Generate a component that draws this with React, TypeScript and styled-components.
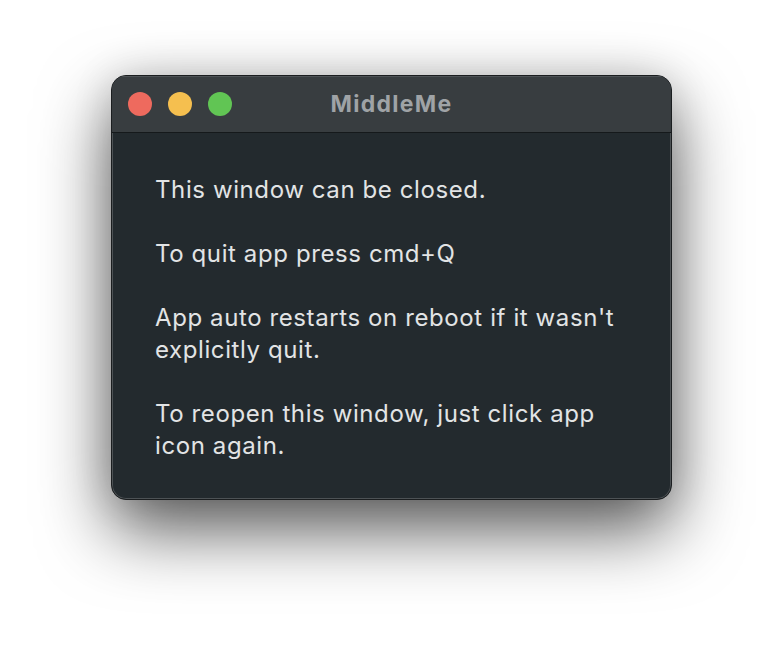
import React from 'react';
import styled, { createGlobalStyle } from 'styled-components';

const GlobalStyle = createGlobalStyle`
  html, body {
    margin: 0;
    padding: 0;
    background: #ffffff;
  }
`;

// Paragraphs shown in the window body.
const lines: string[][] = [
  ['This window can be closed.'],
  ['To quit app press cmd+Q'],
  ["App auto restarts on reboot if it wasn't", 'explicitly quit.'],
  ['To reopen this window, just click app', 'icon again.'],
];

/**
 * App draws the MiddleMe info window on a plain desktop.
 */
export default function App() {
  return (
    <Desktop>
      <GlobalStyle />
      <Window>
        <TitleBar>
          <Lights>
            <Light color="#ee6a5e" />
            <Light color="#f5bf4f" />
            <Light color="#61c554" />
          </Lights>
          <Title>MiddleMe</Title>
        </TitleBar>
        <Body>
          {lines.map((para, i) => (
            <Paragraph key={i}>
              {para.map((l, j) => (
                <div key={j}>{l}</div>
              ))}
            </Paragraph>
          ))}
        </Body>
      </Window>
    </Desktop>
  );
}

const Desktop = styled('div')`
  width: 784px;
  height: 648px;
  box-sizing: border-box;
  padding: 75px 0 0 111px;
  background: #ffffff;
  overflow: hidden;
`;

const Window = styled('div')`
  width: 561px;
  height: 425px;
  box-sizing: border-box;
  border-radius: 15px;
  border: 1px solid #1b1e20;
  background: #232a2e;
  box-shadow: inset 0 0 0 1px #4d5255, 0 30px 70px rgba(0, 0, 0, 0.65),
    0 0 40px rgba(0, 0, 0, 0.12);
  overflow: hidden;
  display: flex;
  flex-direction: column;
  font-family: Inter, 'Noto Sans', sans-serif;
`;

const TitleBar = styled('div')`
  position: relative;
  height: 56px;
  flex: none;
  display: flex;
  align-items: center;
  justify-content: center;
  background: #383d40;
  border-bottom: 1px solid #15191b;
  box-shadow: inset 0 1px 0 #4e5356;
`;

const Lights = styled('div')`
  position: absolute;
  left: 16px;
  top: 16px;
  display: flex;
  gap: 16px;
`;

const Light = styled('span')<{ color: string }>`
  width: 24px;
  height: 24px;
  border-radius: 50%;
  background: ${(p) => p.color};
`;

const Title = styled('div')`
  color: #9fa3a6;
  font-weight: 700;
  font-size: 23px;
  letter-spacing: 1.3px;
`;

const Body = styled('div')`
  padding: 41px 44px 0 43px;
  color: #e2e4e5;
  font-size: 24px;
  line-height: 32px;
  letter-spacing: 0.6px;
  display: flex;
  flex-direction: column;
  gap: 32px;
`;

const Paragraph = styled('div')``;
